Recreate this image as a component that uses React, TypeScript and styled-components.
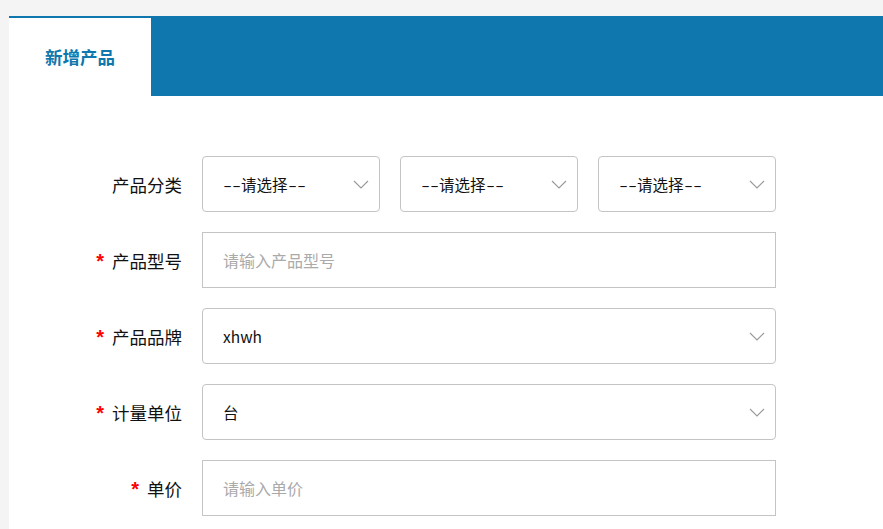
import React from "react";
import styled, { createGlobalStyle } from "styled-components";

const Global = createGlobalStyle`
  html, body { margin: 0; padding: 0; background: #f4f4f4; }
  body { font-family: "Noto Sans CJK SC", "Noto Sans", sans-serif; }
  * { box-sizing: border-box; }
`;

const Page = styled.div`
  padding: 16px 0 0 9px;
  height: 529px;
  overflow: hidden;
`;

const Panel = styled.div`
  background: #fff;
  height: 600px;
`;

const TabBar = styled.div`
  display: flex;
  height: 80px;
  background: #0f77ad;
`;

const Tab = styled.div`
  width: 142px;
  background: #fff;
  border-top: 2px solid #0f77ad;
  display: flex;
  align-items: center;
  justify-content: center;
  color: #0f77ad;
  font-size: 17.5px;
  font-weight: 700;
  padding-bottom: 2px;
`;

const Form = styled.div`
  display: flex;
  flex-direction: column;
  gap: 20px;
  padding-top: 60px;
`;

const Row = styled.div`
  display: flex;
  align-items: center;
  height: 56px;
`;

const Label = styled.div`
  width: 193px;
  padding-right: 20px;
  font-size: 17.5px;
  color: #111;
  white-space: nowrap;
  display: flex;
  justify-content: flex-end;
  align-items: center;
`;

const Star = styled.span`
  color: #f00;
  margin-right: 8px;
  font-family: "Liberation Sans", sans-serif;
  font-size: 20px;
  font-weight: 700;
  position: relative;
  top: 1px;
`;

const Controls = styled.div`
  display: flex;
  gap: 20px;
`;

const SelectBox = styled.div<{ $w: number }>`
  width: ${(p) => p.$w}px;
  height: 56px;
  border: 1px solid #c4c4c4;
  border-radius: 4px;
  display: flex;
  align-items: center;
  justify-content: space-between;
  padding: 0 10px 0 20px;
  font-size: 15.5px;
  color: #111;
  white-space: nowrap;
`;

const Value = styled.span`
  display: inline-flex;
  align-items: center;
  white-space: nowrap;
`;

const Dash = styled.span`
  display: inline-block;
  width: 9px;
  text-align: center;
  transform: scaleX(1.6);
`;

const InputBox = styled.div`
  width: 574px;
  height: 56px;
  border: 1px solid #c4c4c4;
  display: flex;
  align-items: center;
  padding-left: 20px;
  font-size: 16px;
  color: #aaa;
  white-space: nowrap;
`;

const Chevron = () => (
  <svg width="16" height="9" viewBox="0 0 16 9" fill="none">
    <path d="M1 1 L8 8 L15 1" stroke="#999" strokeWidth="1.1" />
  </svg>
);

const Placeholder = () => (
  <Value>
    <Dash>-</Dash>
    <Dash>-</Dash>请选择<Dash>-</Dash>
    <Dash>-</Dash>
  </Value>
);

const Select = ({ w, value }: { w: number; value: React.ReactNode }) => (
  <SelectBox $w={w}>
    {value}
    <Chevron />
  </SelectBox>
);

export default function App() {
  return (
    <>
      <Global />
      <Page>
        <Panel>
          <TabBar>
            <Tab>新增产品</Tab>
          </TabBar>
          <Form>
            <Row>
              <Label>产品分类</Label>
              <Controls>
                <Select w={178} value={<Placeholder />} />
                <Select w={178} value={<Placeholder />} />
                <Select w={178} value={<Placeholder />} />
              </Controls>
            </Row>
            <Row>
              <Label>
                <Star>*</Star>产品型号
              </Label>
              <InputBox>请输入产品型号</InputBox>
            </Row>
            <Row>
              <Label>
                <Star>*</Star>产品品牌
              </Label>
              <Select w={574} value={<Value>xhwh</Value>} />
            </Row>
            <Row>
              <Label>
                <Star>*</Star>计量单位
              </Label>
              <Select w={574} value={<Value>台</Value>} />
            </Row>
            <Row>
              <Label>
                <Star>*</Star>单价
              </Label>
              <InputBox>请输入单价</InputBox>
            </Row>
          </Form>
        </Panel>
      </Page>
    </>
  );
}
